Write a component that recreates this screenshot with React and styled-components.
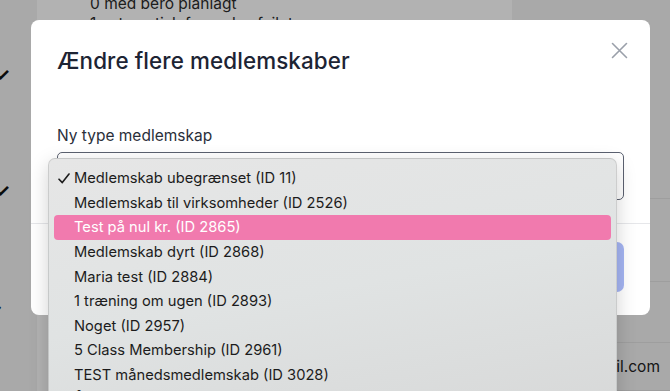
import React from "react";
import styled, { createGlobalStyle } from "styled-components";

const GlobalStyle = createGlobalStyle`
  html, body {
    margin: 0;
    padding: 0;
    background: #ffffff;
  }
  body {
    width: 670px;
    height: 391px;
    overflow: hidden;
    font-family: "Inter", "Noto Sans", sans-serif;
  }
`;

const options = [
  { id: 11, name: "Medlemskab ubegrænset" },
  { id: 2526, name: "Medlemskab til virksomheder" },
  { id: 2865, name: "Test på nul kr." },
  { id: 2868, name: "Medlemskab dyrt" },
  { id: 2884, name: "Maria test" },
  { id: 2893, name: "1 træning om ugen" },
  { id: 2957, name: "Noget" },
  { id: 2961, name: "5 Class Membership" },
  { id: 3028, name: "TEST månedsmedlemskab" },
  { id: 3102, name: "Årskort" },
];

const Page = styled.div`
  position: relative;
  width: 670px;
  height: 391px;
  overflow: hidden;
  display: flex;
`;

// ---------- page behind the modal ----------
const Sidebar = styled.div`
  width: 37px;
  background: #f2f2f2;
  display: flex;
  flex-direction: column;
  padding-top: 65px;
  gap: 96px;
  color: #111111;
  font-size: 18px;
`;

const SideMark = styled.span`
  margin-left: -6px;
  line-height: 20px;
  font-weight: 700;
  color: #111111;
`;

const Main = styled.div`
  width: 475px;
  background: #ffffff;
  padding-left: 53px;
  box-sizing: border-box;
`;

const StatLine = styled.div`
  font-size: 15.5px;
  line-height: 20px;
  color: #2c2c2c;
  margin-top: ${(p) => (p.$first ? "-6px" : "0")};
`;

const RightCol = styled.div`
  flex: 1;
  background: #f3f3f3;
  display: flex;
  flex-direction: column;
`;

const RightRow = styled.div`
  height: ${(p) => p.$h}px;
  border-bottom: 1px solid #e2e2e2;
  display: flex;
  align-items: ${(p) => (p.$align ? p.$align : "center")};
  justify-content: flex-end;
  padding-right: 10px;
  font-size: 15.5px;
  color: #222;
  white-space: nowrap;
  overflow: hidden;
`;

const Backdrop = styled.div`
  position: absolute;
  inset: 0;
  background: rgba(0, 0, 0, 0.3);
`;

// ---------- modal ----------
const Modal = styled.div`
  position: absolute;
  left: 31px;
  top: 20px;
  width: 619px;
  height: 295px;
  background: #ffffff;
  border-radius: 8px;
  display: flex;
  flex-direction: column;
`;

const Header = styled.div`
  display: flex;
  justify-content: space-between;
  align-items: flex-start;
  padding: 26px 22px 0 26px;
`;

const Title = styled.h2`
  margin: 0;
  font-size: 22.4px;
  line-height: 30px;
  font-weight: 500;
  color: #1d2434;
  letter-spacing: 0.1px;
`;

const CloseButton = styled.button`
  border: 0;
  background: none;
  padding: 0;
  margin-top: -4px;
  width: 17px;
  height: 17px;
  color: #9aa0aa;
  cursor: pointer;
`;

const Body = styled.div`
  padding: 48px 26px 23px 26px;
  border-bottom: 1px solid #e6e7ea;
`;

const Label = styled.div`
  font-size: 15.5px;
  line-height: 22px;
  color: #2a2f3a;
  margin-bottom: 5px;
  margin-top: 1px;
`;

const SelectBox = styled.div`
  height: 48px;
  box-sizing: border-box;
  border: 1px solid #5b6170;
  border-radius: 5px;
`;

const Footer = styled.div`
  display: flex;
  justify-content: flex-end;
  padding: 18px 26px 0 26px;
`;

const SaveButton = styled.button`
  width: 110px;
  height: 50px;
  border: 0;
  border-radius: 7px;
  background: #a5b5f3;
  color: #ffffff;
  font-family: inherit;
  font-size: 15px;
`;

// ---------- native select popup ----------
const Menu = styled.div`
  position: absolute;
  left: 48px;
  top: 158px;
  width: 569px;
  height: 260px;
  box-sizing: border-box;
  padding-top: 7px;
  border-radius: 7px;
  border: 1px solid rgba(0, 0, 0, 0.1);
  background: linear-gradient(170deg, #e6e6e6 0%, #e0e3e3 50%, #d7d8d8 100%);
  box-shadow: 0 6px 20px rgba(0, 0, 0, 0.18);
  font-family: "Inter", "Liberation Sans", sans-serif;
`;

const Item = styled.div`
  height: 24.6px;
  margin: 0 5px;
  padding-left: 4px;
  display: flex;
  align-items: center;
  border-radius: 4px;
  font-size: 14.7px;
  color: ${(p) => (p.$active ? "#ffffff" : "#1c1c1c")};
  background: ${(p) => (p.$active ? "#f17aae" : "transparent")};
  white-space: nowrap;
`;

const Check = styled.span`
  width: 16px;
  display: flex;
  align-items: center;
`;

const CheckIcon = () => (
  <svg width="12" height="11" viewBox="0 0 12 11" fill="none">
    <path
      d="M1 6.2L4.3 9.6L11 1"
      stroke="#1c1c1c"
      strokeWidth="1.6"
      strokeLinecap="round"
      strokeLinejoin="round"
    />
  </svg>
);

const CloseIcon = () => (
  <svg width="17" height="17" viewBox="0 0 17 17" fill="none">
    <path
      d="M1.5 1.5L15.5 15.5M15.5 1.5L1.5 15.5"
      stroke="currentColor"
      strokeWidth="1.6"
      strokeLinecap="round"
    />
  </svg>
);

const App = () => {
  return (
    <>
      <GlobalStyle />
      <Page>
        <Sidebar>
          <SideMark>✓</SideMark>
          <SideMark>✓</SideMark>
          <SideMark>›</SideMark>
        </Sidebar>
        <Main>
          <StatLine $first>0 med bero planlagt</StatLine>
          <StatLine>1 automatisk fornyelse fejlet</StatLine>
        </Main>
        <RightCol>
          <RightRow $h={200} />
          <RightRow $h={83} />
          <RightRow $h={60} $align="flex-start">
            <span style={{ marginTop: 14, paddingRight: 30 }}>mm</span>
          </RightRow>
          <RightRow $h={48}>kontakt@gmail.com</RightRow>
        </RightCol>

        <Backdrop />

        <Modal>
          <Header>
            <Title>Ændre flere medlemskaber</Title>
            <CloseButton aria-label="Luk">
              <CloseIcon />
            </CloseButton>
          </Header>
          <Body>
            <Label>Ny type medlemskap</Label>
            <SelectBox />
          </Body>
          <Footer>
            <SaveButton>Gem</SaveButton>
          </Footer>
        </Modal>

        <Menu>
          {options.map((o, i) => (
            <Item key={o.id} $active={i === 2}>
              <Check>{i === 0 && <CheckIcon />}</Check>
              {o.name} (ID {o.id})
            </Item>
          ))}
        </Menu>
      </Page>
    </>
  );
};

export default App;
